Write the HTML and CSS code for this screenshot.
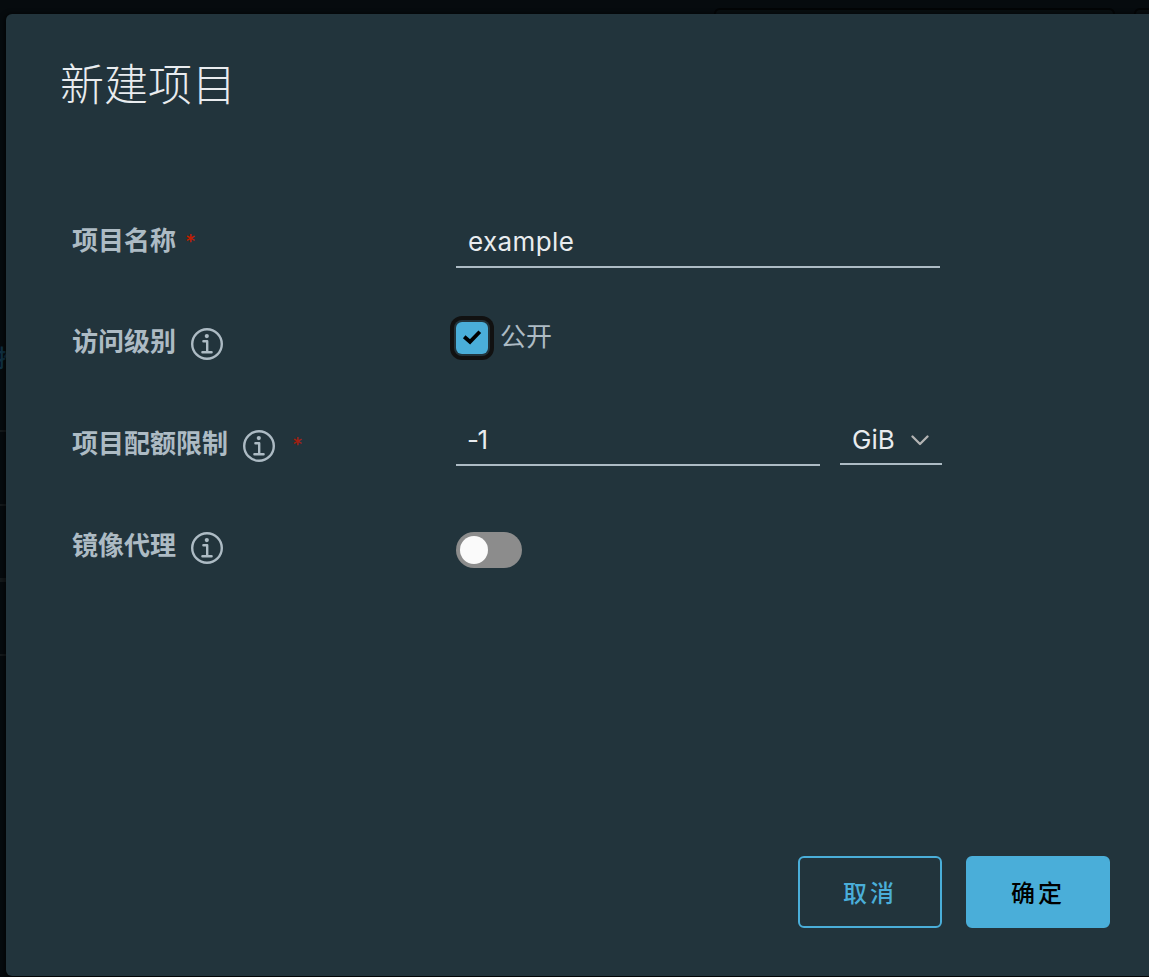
FILE: index.html
```html
<!DOCTYPE html>
<html lang="zh-CN">
<head>
<meta charset="utf-8">
<title>新建项目</title>
<link rel="stylesheet" href="styles.css">
</head>
<body>
<svg width="0" height="0" class="defs">
  <symbol id="info" viewBox="0 0 32 32">
    <circle cx="16" cy="16" r="14.8" fill="none" stroke="currentColor" stroke-width="2.4"/>
    <circle cx="15.8" cy="8.1" r="2.1" fill="currentColor"/>
    <path d="M12.400 13.200h3.800v11M11.400 24.300h9.200" fill="none" stroke="currentColor" stroke-width="2.400" stroke-linecap="round" stroke-linejoin="round"/>
  </symbol>
</svg>
<div class="backdrop">
  <div class="panel panel-wide"></div>
  <div class="panel panel-edge"></div>
  <div class="link">推</div>
  <div class="rule rule-a"></div>
  <div class="rule rule-b"></div>
  <div class="rule rule-c"></div>
  <div class="rule rule-d"></div>
</div>
<main class="dialog">
  <h1 class="title">新建项目</h1>
  <form class="form">
    <div class="row">
      <div class="label label-name">项目名称<span class="star star-name">*</span></div>
      <div class="control name-control"><div class="field name-field">example</div></div>
    </div>
    <div class="row">
      <div class="label">访问级别<svg class="info"><use href="#info"/></svg></div>
      <div class="control access-control">
        <span class="checkbox"><svg class="check" viewBox="0 0 32 32"><path d="M8.200 14.800l5.800 5L23.800 9.700" fill="none" stroke="#000" stroke-width="3.800"/></svg></span>
        <span class="check-label">公开</span>
      </div>
    </div>
    <div class="row">
      <div class="label">项目配额限制<svg class="info"><use href="#info"/></svg><span class="star star-quota">*</span></div>
      <div class="control quota-control">
        <div class="field quota-field">-1</div>
        <div class="field select">GiB<svg class="caret" viewBox="0 0 18 11"><path d="M1.500 1.500L9 9l7.500-7.500" fill="none" stroke="#b3b3b3" stroke-width="2.300" stroke-linecap="round" stroke-linejoin="round"/></svg></div>
      </div>
    </div>
    <div class="row">
      <div class="label">镜像代理<svg class="info"><use href="#info"/></svg></div>
      <div class="control toggle-control"><span class="toggle"><span class="knob"></span></span></div>
    </div>
  </form>
  <footer class="actions">
    <button class="btn btn-outline">取消</button>
    <button class="btn btn-primary">确定</button>
  </footer>
</main>
</body>
</html>
```
FILE: styles.css
```css
* { box-sizing: border-box; }
body {
  margin: 0;
  height: 977px;
  overflow: hidden;
  background: #060b0e;
  color: #adbbc4;
  font-family: Inter, "Noto Sans CJK SC", sans-serif;
  padding: 14px 0 0 6px;
  position: relative;
}
.defs { position: absolute; }
.backdrop { position: absolute; inset: 0; overflow: hidden; }
.panel {
  position: absolute;
  top: 8px;
  height: 40px;
  border: 2px solid #030506;
  border-radius: 6px;
  background: #080e11;
}
.panel-wide { left: 714px; width: 401px; }
.panel-edge { left: 1134px; width: 60px; }
.link {
  position: absolute;
  left: -3px;
  top: 342px;
  font-size: 24px;
  line-height: 34px;
  font-weight: 500;
  color: #103142;
}
.rule { position: absolute; left: 0; width: 6px; height: 2px; background: #14191b; }
.rule-a { top: 430px; }
.rule-b { top: 504px; }
.rule-c { top: 578px; height: 4px; }
.rule-d { top: 654px; }
.dialog {
  position: relative;
  width: 1149px;
  height: 962px;
  border-radius: 6px;
  background: #22343c;
  box-shadow: 0 1px 4px 2px rgba(0, 0, 0, 0.5);
  display: flex;
  flex-direction: column;
  padding: 38px 45px 48px 54px;
}
.title {
  margin: 0;
  height: 60px;
  color: #e9ecef;
  font-family: "Noto Sans CJK SC", sans-serif;
  font-size: 44px;
  line-height: 60px;
  font-weight: 200;
}
.form { margin: 77px 0 0; padding-left: 12px; }
.row { display: grid; grid-template-columns: 384px 1fr; height: 102px; }
.label {
  display: flex;
  align-items: center;
  font-size: 26px;
  line-height: 38px;
  font-weight: 700;
}
.label-name { padding-top: 2px; }
.info { width: 32px; height: 32px; margin: 4px 0 0 15px; }
.star { color: #c21d00; font-size: 17px; font-weight: 700; font-family: "DejaVu Sans", sans-serif; }
.star-name { margin-left: 10px; }
.star-quota { margin-left: 18px; color: #a32012; }
.control { display: flex; align-items: flex-start; }
.name-control, .access-control { padding-top: 31px; }
.quota-control { padding-top: 25px; gap: 20px; }
.toggle-control { padding-top: 37px; }
.field {
  height: 48px;
  padding: 0 12px;
  border-bottom: 2px solid #adbbc4;
  color: #e9ecef;
  font-size: 26px;
  line-height: 44px;
}
.name-field { width: 484px; letter-spacing: 0.4px; }
.quota-field { width: 364px; padding-left: 11px; letter-spacing: -1.5px; }
.select { display: flex; align-items: center; justify-content: space-between; width: 102px; height: 47px; padding-bottom: 2px; }
.caret { width: 18px; height: 11px; position: relative; left: -1px; top: 1px; }
.checkbox {
  width: 32px;
  height: 32px;
  border-radius: 6px;
  background: #4aaed9;
  box-shadow: 0 0 0 2px #22343c, 0 0 0 6px #111;
}
.check { display: block; width: 32px; height: 32px; }
.check-label { margin-left: 12px; font-size: 26px; line-height: 30px; }
.toggle { width: 66px; height: 36px; padding: 4px; border-radius: 18px; background: #8c8c8c; }
.knob { display: block; width: 28px; height: 28px; border-radius: 50%; background: #fafafa; }
.actions { display: flex; justify-content: flex-end; gap: 24px; margin-top: auto; }
.btn {
  width: 144px;
  height: 72px;
  padding: 0 0 2px;
  border: 2px solid #4aaed9;
  border-radius: 6px;
  font-family: "Noto Sans CJK SC", sans-serif;
  font-size: 24px;
  font-weight: 500;
  letter-spacing: 3px;
}
.btn-outline { background: transparent; color: #4aaed9; }
.btn-primary { background: #4aaed9; color: #000; }
```
